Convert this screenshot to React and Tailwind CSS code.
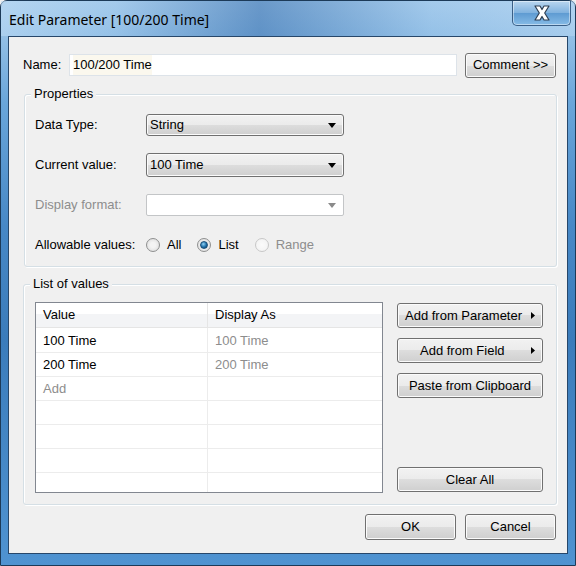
import React from "react";

const font = { fontFamily: '"Liberation Sans", Arial, sans-serif' };

function Arrow({ disabled }) {
  return (
    <svg width="8" height="5" viewBox="0 0 8 5" className="shrink-0">
      <path d="M0 0 H8 L4 5 Z" fill={disabled ? "#8a8a8a" : "#000"} />
    </svg>
  );
}

function RightArrow() {
  return (
    <svg width="4" height="7" viewBox="0 0 4 7" className="shrink-0">
      <path d="M0 0 L4 3.5 L0 7 Z" fill="#000" />
    </svg>
  );
}

function Select({ value, disabled, h = "h-[22px]" }) {
  if (disabled) {
    return (
      <div className={`w-[198px] ${h} flex items-center justify-between pl-[4px] pr-[7px] border border-[#c3c5c7] rounded-[2px] bg-white`}>
        <span />
        <Arrow disabled />
      </div>
    );
  }
  return (
    <div className={`w-[198px] ${h} flex items-center justify-between pl-[3px] pr-[7px] border border-[#707070] rounded-[3px] bg-[linear-gradient(#f2f2f2_0%,#ebebeb_50%,#dddddd_50%,#cfcfcf_100%)] shadow-[inset_0_0_0_1px_#fbfbfb] text-[13px] text-black`}>
      <span>{value}</span>
      <Arrow />
    </div>
  );
}

function Btn({ children, className = "" }) {
  return (
    <div className={`flex items-center border border-[#707070] rounded-[3px] bg-[linear-gradient(#f2f2f2_0%,#ebebeb_50%,#dddddd_50%,#cfcfcf_100%)] shadow-[inset_0_0_0_1px_#fbfbfb] text-[13px] text-black ${className}`}>
      {children}
    </div>
  );
}

function Radio({ checked, disabled, label }) {
  return (
    <div className="flex items-center gap-[7px]">
      <div
        className={`w-[14px] h-[14px] rounded-full border flex items-center justify-center ${
          disabled
            ? "border-[#c8c8c8] bg-[radial-gradient(circle_at_50%_50%,#fbfbfb,#f1f1f1)]"
            : "border-[#8e8f8f] bg-[radial-gradient(circle_at_50%_50%,#f4f4f4_30%,#d8d8d8_100%)]"
        }`}
      >
        {checked && (
          <div className="w-[8px] h-[8px] rounded-full bg-[radial-gradient(circle_at_40%_35%,#8fd2f5,#1d6ea8_55%,#0c3f66)] border border-[#1b4f78]" />
        )}
      </div>
      <span className={`text-[13px] ${disabled ? "text-[#8d8d8d]" : "text-black"}`}>{label}</span>
    </div>
  );
}

function Group({ title, className = "", children }) {
  return (
    <div className={`relative border border-[#d5dfe5] rounded-[3px] shadow-[inset_1px_1px_0_#fff,1px_1px_0_#fff] ${className}`}>
      <span className="absolute left-[6px] top-[-9px] px-[3px] bg-[#f0f0f0] text-[13px] leading-[16px] text-black">
        {title}
      </span>
      {children}
    </div>
  );
}

export default function App() {
  const rows = [
    ["100 Time", "100 Time"],
    ["200 Time", "200 Time"],
    ["Add", ""],
    ["", ""],
    ["", ""],
    ["", ""],
    ["", ""],
  ];
  return (
    <div style={font} className="w-[576px] h-[566px] overflow-hidden bg-[#f0f0f0]">
      <div className="w-[576px] h-[566px] flex flex-col rounded-t-[7px] border border-[#1c3a58] bg-[linear-gradient(180deg,#a9cdec_0%,#6aa6da_18%,#4788c6_40%,#3b7cbb_60%,#4f93d1_100%)]">
        {/* Title bar */}
        <div className="h-[35px] flex items-start shrink-0 bg-[linear-gradient(90deg,rgba(190,220,245,0.55)_0%,rgba(150,195,235,0.25)_20%,rgba(30,90,160,0.45)_45%,rgba(150,195,235,0.25)_75%,rgba(190,220,245,0.45)_100%)]">
          <div
            className="pl-[8px] pt-[9px] text-[14px] leading-[19px] text-black"
            style={{ fontFamily: '"Noto Sans", "Liberation Sans", sans-serif' }}
          >
            Edit Parameter [100/200 Time]
          </div>
          <div className="ml-auto mr-[4px] w-[59px] h-[25px] rounded-b-[5px] border border-t-0 border-[#3a5f86] bg-[linear-gradient(#b9d6ef,#7fb1de_50%,#5e9bd2_51%,#86bbe6)] shadow-[inset_0_0_0_1px_rgba(255,255,255,0.45)] flex items-center justify-center">
            <svg width="20" height="16" viewBox="0 0 20 16">
              <path
                d="M3 1 H8 L10 4.5 L12 1 H17 L12.7 8 L17 15 H12 L10 11.5 L8 15 H3 L7.3 8 Z"
                fill="#fff"
                stroke="#2f3f52"
                strokeWidth="1.2"
                strokeLinejoin="round"
              />
            </svg>
          </div>
        </div>

        {/* Client area */}
        <div className="mx-[7px] h-[518px] border border-[#27476a] bg-[#f0f0f0] flex flex-col pl-[14px] pr-[11px] pt-[15px]">
          {/* Name row */}
          <div className="h-[26px] flex items-center">
            <span className="w-[46px] text-[13px] text-black">Name:</span>
            <div className="w-[388px] h-[22px] border border-[#dde3e9] bg-white flex items-center pl-[3px] text-[13px] text-black">
              <span className="bg-[#fbf8ee]">100/200 Time</span>
            </div>
            <Btn className="ml-[8px] w-[91px] h-[25px] justify-center">Comment &gt;&gt;</Btn>
          </div>

          {/* Properties */}
          <Group title="Properties" className="mt-[16px] ml-[1px] w-[533px] h-[173px] pt-[10px] pl-[10px]">
            <div className="h-[40px] flex items-center">
              <span className="w-[111px] text-[13px] text-black">Data Type:</span>
              <Select value="String" h="h-[22px]" />
            </div>
            <div className="h-[40px] flex items-center">
              <span className="w-[111px] text-[13px] text-black">Current value:</span>
              <Select value="100 Time" h="h-[24px]" />
            </div>
            <div className="h-[40px] flex items-center">
              <span className="w-[111px] text-[13px] text-[#8d8d8d]">Display format:</span>
              <Select disabled h="h-[22px]" />
            </div>
            <div className="h-[40px] flex items-center">
              <span className="w-[111px] text-[13px] text-black">Allowable values:</span>
              <div className="flex items-center gap-[16px]">
                <Radio label="All" />
                <Radio label="List" checked />
                <Radio label="Range" disabled />
              </div>
            </div>
          </Group>

          {/* List of values */}
          <Group title="List of values" className="mt-[17px] w-[534px] h-[221px] pt-[17px] pl-[11px] flex">
            <div className="w-[348px] h-[191px] border border-[#828790] bg-white flex flex-col overflow-hidden">
              <div className="h-[25px] shrink-0 flex border-b border-[#e5e5e5] bg-[linear-gradient(#ffffff_0%,#ffffff_45%,#f3f4f6_46%,#f3f4f6_100%)] text-[13px] text-black">
                <div className="w-[172px] border-r border-[#e5e5e5] flex items-center pl-[7px]">Value</div>
                <div className="flex-1 flex items-center pl-[7px]">Display As</div>
              </div>
              {rows.map((r, i) => (
                <div
                  key={i}
                  className={`${i === 0 ? "h-[25px]" : "h-[24px]"} shrink-0 flex border-b border-[#ececec] text-[13px]`}
                >
                  <div className={`w-[172px] border-r border-[#ececec] flex items-center pl-[7px] pt-[1px] ${r[0] === "Add" ? "text-[#8d8d8d]" : "text-black"}`}>
                    {r[0]}
                  </div>
                  <div className="flex-1 flex items-center pl-[7px] pt-[1px] text-[#8d8d8d]">{r[1]}</div>
                </div>
              ))}
            </div>
            <div className="ml-[14px] w-[146px] h-[191px] flex flex-col">
              <Btn className="mt-[1px] h-[25px] pl-[7px] pr-[7px] justify-between">
                <span>Add from Parameter</span>
                <RightArrow />
              </Btn>
              <Btn className="mt-[10px] h-[25px] pl-[22px] pr-[7px] justify-between">
                <span>Add from Field</span>
                <RightArrow />
              </Btn>
              <Btn className="mt-[10px] h-[25px] justify-center">Paste from Clipboard</Btn>
              <Btn className="mt-auto mb-[1px] h-[25px] justify-center">Clear All</Btn>
            </div>
          </Group>

          {/* OK / Cancel */}
          <div className="mt-[9px] flex justify-end gap-[9px]">
            <Btn className="w-[91px] h-[26px] justify-center">OK</Btn>
            <Btn className="w-[91px] h-[26px] justify-center">Cancel</Btn>
          </div>
        </div>
      </div>
    </div>
  );
}
